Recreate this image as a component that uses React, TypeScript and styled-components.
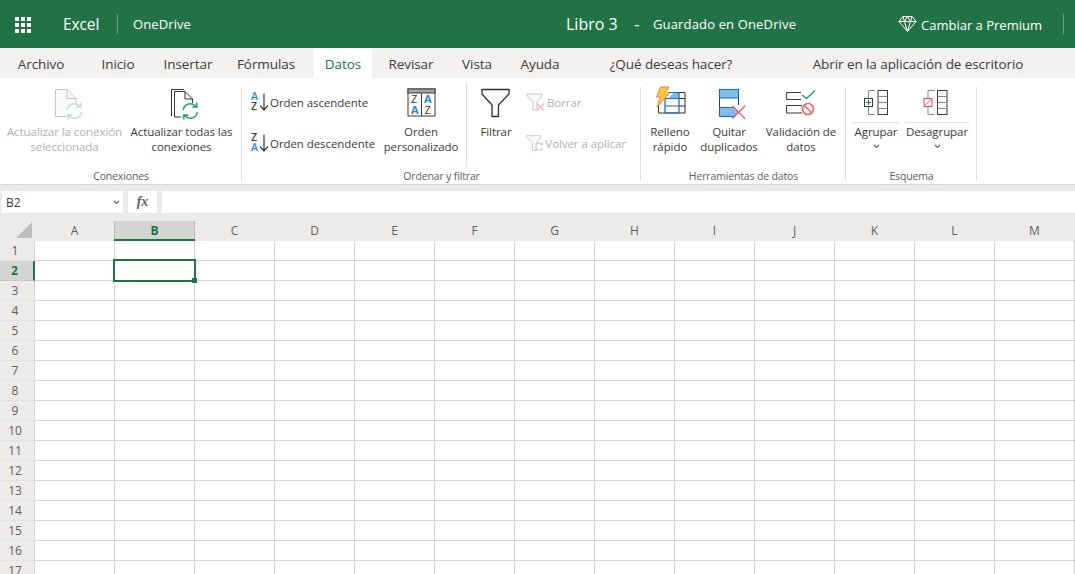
import { createGlobalStyle, styled } from "styled-components";

const GlobalStyle = createGlobalStyle`
  html, body {
    margin: 0;
    padding: 0;
    height: 574px;
    overflow: hidden;
    background: #edebe9;
    font-family: "Open Sans", "Noto Sans", "Liberation Sans", sans-serif;
  }
`;

const Page = styled.div`
  width: 1075px;
  height: 574px;
  display: flex;
  flex-direction: column;
  overflow: hidden;
`;

/* top green bar */
const Header = styled.header`
  height: 48px;
  flex: none;
  background: #217346;
  color: #fff;
  display: flex;
  align-items: center;
`;
const Waffle = styled.div`
  width: 16px;
  height: 16px;
  margin: 2px 32px 0 15px;
  display: grid;
  grid-template-columns: repeat(3, 4px);
  grid-auto-rows: 4px;
  gap: 2px;
  span {
    background: #fff;
  }
`;
const AppName = styled.span`
  font-size: 15.5px;
  width: 54px;
  letter-spacing: -0.1px;
`;
const VSep = styled.span`
  width: 1px;
  height: 20px;
  background: rgba(255, 255, 255, 0.35);
`;
const Place = styled.span`
  font-size: 13px;
  margin-left: 15px;
  width: 433px;
  letter-spacing: 0.1px;
`;
const DocTitle = styled.span`
  font-size: 16px;
  width: 87px;
  white-space: nowrap;
`;
const SaveState = styled.span`
  font-size: 13px;
  width: 245px;
  letter-spacing: 0.15px;
`;
const Premium = styled.span`
  font-size: 13px;
  margin-left: 4px;
  padding-top: 2px;
  width: 142px;
`;

/* tabs */
const TabBar = styled.nav`
  height: 30px;
  flex: none;
  background: #f3f2f1;
  display: flex;
  align-items: stretch;
  padding-left: 4px;
`;
const Tab = styled.div<{ $active?: boolean; $w: number }>`
  width: ${(p) => p.$w}px;
  font-size: 13.5px;
  letter-spacing: -0.08px;
  line-height: 32px;
  text-align: center;
  white-space: nowrap;
  color: ${(p) => (p.$active ? "#217346" : "#3b3a39")};
  background: ${(p) => (p.$active ? "#fff" : "transparent")};
`;

/* ribbon */
const Ribbon = styled.section`
  height: 107px;
  flex: none;
  background: #fff;
  display: flex;
  border-bottom: 1px solid #dcdad8;
  box-sizing: border-box;
`;
const Group = styled.div<{ $w: number }>`
  width: ${(p) => p.$w}px;
  flex: none;
  box-sizing: border-box;
  display: flex;
  flex-direction: column;
  position: relative;
  &::after {
    content: "";
    position: absolute;
    right: 0;
    top: 9px;
    bottom: 3px;
    width: 1px;
    background: #e1dfdd;
  }
`;
const GroupBody = styled.div`
  flex: 1;
  min-height: 0;
  display: flex;
  align-items: flex-start;
`;
const GroupLabel = styled.div`
  height: 16px;
  font-size: 10.5px;
  line-height: 16px;
  text-align: center;
  color: #605e5c;
  letter-spacing: -0.15px;
`;
const LargeButton = styled.div<{ $w: number; $ml?: number; $off?: boolean }>`
  width: ${(p) => p.$w}px;
  margin-left: ${(p) => p.$ml ?? 0}px;
  flex: none;
  padding-top: 10px;
  display: flex;
  flex-direction: column;
  align-items: center;
  font-size: 11.5px;
  line-height: 15px;
  letter-spacing: -0.07px;
  text-align: center;
  white-space: nowrap;
  color: ${(p) => (p.$off ? "#b3b0ad" : "#3b3a39")};
`;
const IconSlot = styled.div<{ $h?: number }>`
  height: ${(p) => p.$h ?? 36}px;
  display: flex;
  align-items: flex-start;
  justify-content: center;
`;
const Stack = styled.div<{ $w: number; $ml: number }>`
  width: ${(p) => p.$w}px;
  margin-left: ${(p) => p.$ml}px;
  flex: none;
  padding-top: 13px;
  display: flex;
  flex-direction: column;
  gap: 19px;
`;
const SmallButton = styled.div<{ $off?: boolean }>`
  height: 22px;
  display: flex;
  align-items: center;
  gap: 1px;
  font-size: 11.5px;
  letter-spacing: -0.07px;
  white-space: nowrap;
  color: ${(p) => (p.$off ? "#b3b0ad" : "#3b3a39")};
`;
const Divider = styled.div`
  width: 1px;
  height: 85px;
  margin: 4px 0 0 0;
  background: #e1dfdd;
  flex: none;
`;
const SplitRule = styled.div`
  width: 100%;
  height: 1px;
  background: #e1dfdd;
  margin-bottom: 1px;
`;
const Chevron = styled.svg`
  margin-top: 5px;
`;

/* formula bar */
const FormulaBar = styled.div`
  height: 36px;
  flex: none;
  padding: 6px 0 0 2px;
  box-sizing: border-box;
  display: flex;
  gap: 5px;
  background: #edebe9;
`;
const NameBox = styled.div`
  width: 121px;
  height: 22px;
  box-sizing: border-box;
  background: #fff;
  padding: 0 3px 0 4px;
  display: flex;
  align-items: center;
  justify-content: space-between;
  font-size: 12px;
  color: #3b3a39;
  svg {
    margin-top: 0;
  }
`;
const FxBox = styled.div`
  width: 29px;
  height: 22px;
  background: #fff;
  text-align: center;
  font-family: "Liberation Serif", serif;
  font-style: italic;
  font-weight: 700;
  font-size: 14px;
  line-height: 21px;
  color: #605e5c;
`;
const FormulaInput = styled.div`
  flex: 1;
  height: 22px;
  background: #fff;
`;

/* sheet */
const Sheet = styled.div`
  flex: 1;
  display: grid;
  grid-template-columns: 35px repeat(13, 80px);
  grid-auto-rows: 20px;
  align-content: start;
  overflow: hidden;
  background: #fff;
`;
const Corner = styled.div`
  background: #edebe9;
  position: relative;
  &::after {
    content: "";
    position: absolute;
    right: 3px;
    bottom: 3px;
    border-style: solid;
    border-width: 0 0 16px 16px;
    border-color: transparent transparent #bfbdbb transparent;
  }
`;
const ColHead = styled.div<{ $on?: boolean }>`
  box-sizing: border-box;
  position: relative;
  background: ${(p) => (p.$on ? "#d4d4d2" : "#edebe9")};
  box-shadow: ${(p) => (p.$on ? "-1px 0 0 #bdbbb9" : "none")};
  border-right: 1px solid ${(p) => (p.$on ? "#bdbbb9" : "#edebe9")};
  color: ${(p) => (p.$on ? "#217346" : "#605e5c")};
  font-weight: ${(p) => (p.$on ? 700 : 400)};
  font-size: 12px;
  line-height: 19px;
  text-align: center;
  &::after {
    content: "";
    display: ${(p) => (p.$on ? "block" : "none")};
    position: absolute;
    left: -1px;
    right: -2px;
    bottom: 0;
    height: 2px;
    background: #217346;
  }
`;
const RowHead = styled.div<{ $on?: boolean }>`
  box-sizing: border-box;
  background: ${(p) => (p.$on ? "#d4d4d2" : "#edebe9")};
  border-right: ${(p) => (p.$on ? "2px solid #217346" : "1px solid #d4d4d4")};
  border-bottom: 1px solid ${(p) => (p.$on ? "#c8c6c4" : "#e3e1df")};
  color: ${(p) => (p.$on ? "#217346" : "#605e5c")};
  font-weight: ${(p) => (p.$on ? 700 : 400)};
  font-size: 12px;
  line-height: 20px;
  text-align: center;
  padding-right: 4px;
`;
const Cell = styled.div`
  box-sizing: border-box;
  border-right: 1px solid #d4d4d4;
  border-bottom: 1px solid #d4d4d4;
  position: relative;
`;
const Selection = styled.div`
  position: absolute;
  left: -2px;
  top: -2px;
  right: -2px;
  bottom: -2px;
  border: 2px solid #217346;
  z-index: 2;
  &::after {
    content: "";
    position: absolute;
    right: -3px;
    bottom: -3px;
    width: 5px;
    height: 5px;
    background: #217346;
  }
`;

const SrcBlue = "#2b88d8";
const Ink = "#3b3a39";

function RefreshArrows({ x, y, color }: { x: number; y: number; color: string }) {
  return (
    <g transform={`translate(${x} ${y})`} stroke={color} strokeWidth="1.5" fill="none">
      <path d="M-7 -1A7 7 0 0 1 5.5 -4.5M6.5 -8.5V-4H2" />
      <path d="M7 1A7 7 0 0 1 -5.5 4.5M-6.5 8.5V4H-2" />
    </g>
  );
}

function DocRefreshIcon({ off }: { off?: boolean }) {
  if (off) {
    return (
      <svg width="32" height="32" viewBox="0 0 32 32" fill="none" overflow="visible">
        <path d="M6.5 28.5V1.5H18L27 10.5V15M6.5 28.5H17" stroke="#c8c6c4" fill="#fafafa" />
        <path d="M18 1.5V10.5H27" stroke="#c8c6c4" />
        <RefreshArrows x={25.3} y={23} color="#b7e4c9" />
      </svg>
    );
  }
  return (
    <svg width="32" height="32" viewBox="0 0 32 32" fill="none" overflow="visible">
      <path d="M5.5 28V1.5H18" stroke="#323130" />
      <path d="M8.5 29V3.5H19L26.5 11V15M8.5 29H15" stroke="#323130" fill="#fff" />
      <path d="M19 3.5V11H26.5" stroke="#323130" />
      <RefreshArrows x={24.3} y={23} color="#21a366" />
    </svg>
  );
}

function SortIcon({ desc }: { desc?: boolean }) {
  const t = { fontSize: 10.5, fontWeight: 600, fontFamily: "Open Sans, sans-serif" };
  return (
    <svg width="19" height="22" viewBox="0 0 19 22" fill="none" overflow="visible">
      <text x="1" y="9" {...t} fill={desc ? Ink : SrcBlue}>
        {desc ? "Z" : "A"}
      </text>
      <text x="1" y="18.5" {...t} fill={desc ? SrcBlue : Ink}>
        {desc ? "A" : "Z"}
      </text>
      <path d="M14 2.5v16M10 14.5l4 4.5 4-4.5" stroke={Ink} strokeWidth="1.2" />
    </svg>
  );
}

function CustomSortIcon() {
  const t = { fontSize: 11, fontFamily: "Open Sans, sans-serif" };
  return (
    <svg width="29" height="30" viewBox="0 0 29 30" fill="none">
      <rect x="1" y="1" width="27" height="27" fill="#fff" stroke={Ink} />
      <rect x="1" y="1" width="27" height="4" fill="#a6a6a6" stroke={Ink} />
      <path d="M14.5 5v23" stroke={Ink} />
      <text x="4" y="15" {...t} fill={Ink}>Z</text>
      <text x="4" y="26" {...t} fontWeight="700" fill={SrcBlue}>A</text>
      <text x="17" y="15" {...t} fontWeight="700" fill={SrcBlue}>A</text>
      <text x="17.5" y="26" {...t} fill={Ink}>Z</text>
    </svg>
  );
}

function FunnelIcon() {
  return (
    <svg width="30" height="30" viewBox="0 0 30 30" fill="none">
      <path d="M1 1.5H28V6L17.5 17V28.5H11V17L1 6Z" fill="#fafafa" stroke="#323130" strokeWidth="1.3" />
    </svg>
  );
}

function SmallFunnelIcon({ kind }: { kind: "clear" | "reapply" }) {
  return (
    <svg width="20" height="20" viewBox="0 0 20 20" fill="none">
      <path d="M1 2H16V4L11 10V18H7V10L1 4Z" fill="#fafafa" stroke="#c8c6c4" />
      {kind === "clear" ? (
        <path d="M11 11.5l7 7M18 11.5l-7 7" stroke="#f0b4b4" strokeWidth="1.2" />
      ) : (
        <path d="M11 13a4 4 0 0 1 7-1.5M18.5 15a4 4 0 0 1-7 1.5M18 9.5v2.5h-2.5M11 19v-2.5h2.5" stroke="#a8dcbc" strokeWidth="1.1" />
      )}
    </svg>
  );
}

function FlashFillIcon() {
  return (
    <svg width="32" height="30" viewBox="0 3 32 30" fill="none" overflow="visible">
      <path d="M4.5 28V13.5H11V7.5H31V28Z" fill="#fafafa" />
      <path d="M14 13.5L20 7.5H25V13.5Z" fill="#83bbeb" />
      <path d="M4.5 21V28H31V7.5H25M25 13.5H31M25 21H31" stroke="#323130" />
      <path d="M11 13.5V28M25 7.5V28M11 13.5H25M11 21H25M11 28H25M14 7.5H25" stroke="#0f6cbd" strokeWidth="1.2" />
      <path d="M6.5 2H15L11 9H15L3 22L6.5 12H2.5Z" fill="#ffc83d" stroke="#e8833a" />
    </svg>
  );
}

function RemoveDupIcon() {
  return (
    <svg width="30" height="32" viewBox="0 0 30 32" fill="none" overflow="visible">
      <rect x="5.5" y="1.5" width="19" height="8.5" fill="#83bbeb" stroke="#0f6cbd" />
      <path d="M5.5 10V19.5M24.5 10V17" stroke={Ink} />
      <path d="M5.5 19.5H20L24.5 24L20 28.5H5.5Z" fill="#83bbeb" stroke="#0f6cbd" />
      <path d="M18.2 17.8l13 13M31.2 17.8l-13 13" stroke="#e8636b" strokeWidth="1.3" />
    </svg>
  );
}

function ValidationIcon() {
  return (
    <svg width="32" height="30" viewBox="0 0 32 30" fill="none">
      <path d="M16 4.5H1.5V11.5H16" fill="#fafafa" stroke={Ink} />
      <path d="M17 17.5H1.5V25H17" fill="#fafafa" stroke={Ink} />
      <path d="M17 7l4.5 3.5L30 2.5" stroke="#21a366" strokeWidth="1.4" />
      <circle cx="23" cy="21" r="5.5" fill="#fff" stroke="#e8636b" strokeWidth="1.6" />
      <path d="M19 17l8 8" stroke="#e8636b" strokeWidth="1.6" />
    </svg>
  );
}

function OutlineIcon({ minus }: { minus?: boolean }) {
  const c = minus ? "#e8474c" : "#0f6cbd";
  return (
    <svg width="26" height="27" viewBox={minus ? "1.5 0 26 27" : "0 0 26 27"} fill="none" overflow="visible">
      <rect x="15" y="2.5" width="9.5" height="24" fill="#fff" stroke={Ink} />
      <path d="M15 8.5h9.5M15 14.5h9.5M15 20.5h9.5" stroke="#8a8886" />
      <path d="M12 2.5H5.5V10M5.5 19V26.5H12" stroke="#8a8886" />
      <rect x="1.5" y="10.5" width="8" height="8" fill="#fff" stroke={minus ? c : Ink} />
      {minus ? (
        <path d="M2.5 17.5l6-6" stroke={c} />
      ) : (
        <path d="M5.5 12v5M3 14.5h5" stroke={c} />
      )}
    </svg>
  );
}

function DiamondIcon() {
  return (
    <svg width="19" height="18" viewBox="0 0 19 18" fill="none" stroke="#fff" strokeWidth="1">
      <path d="M5 1.5H14L18 6.5L9.5 16.5L1 6.5Z" />
      <path d="M1 6.5H18M6.5 6.5L9.5 16.5L12.5 6.5M6.5 6.5L5 1.5M12.5 6.5L14 1.5M6.5 6.5L9.5 1.5L12.5 6.5" />
    </svg>
  );
}

function ChevronDown() {
  return (
    <Chevron width="7" height="5" viewBox="0 0 7 5" fill="none">
      <path d="M1 1l2.5 2.5L6 1" stroke="#605e5c" strokeWidth="1.1" />
    </Chevron>
  );
}

const columns = "ABCDEFGHIJKLM".split("");
const rows = Array.from({ length: 17 }, (_, i) => i + 1);

export default function App() {
  return (
    <Page>
      <GlobalStyle />
      <Header>
        <Waffle>
          {Array.from({ length: 9 }, (_, i) => (
            <span key={i} />
          ))}
        </Waffle>
        <AppName>Excel</AppName>
        <VSep />
        <Place>OneDrive</Place>
        <DocTitle>Libro 3&nbsp;&nbsp;&nbsp;&nbsp;-</DocTitle>
        <SaveState>Guardado en OneDrive</SaveState>
        <DiamondIcon />
        <Premium>Cambiar a Premium</Premium>
        <VSep />
      </Header>

      <TabBar>
        <Tab $w={74}>Archivo</Tab>
        <Tab $w={80}>Inicio</Tab>
        <Tab $w={60}>Insertar</Tab>
        <Tab $w={96}>Fórmulas</Tab>
        <Tab $w={58} $active>Datos</Tab>
        <Tab $w={78}>Revisar</Tab>
        <Tab $w={54}>Vista</Tab>
        <Tab $w={72}>Ayuda</Tab>
        <Tab $w={190}>¿Qué deseas hacer?</Tab>
        <Tab $w={304}>Abrir en la aplicación de escritorio</Tab>
      </TabBar>

      <Ribbon>
        <Group $w={242}>
          <GroupBody>
            <LargeButton $w={129} $off>
              <IconSlot><DocRefreshIcon off /></IconSlot>
              Actualizar la conexión
              <br />
              seleccionada
            </LargeButton>
            <LargeButton $w={105}>
              <IconSlot><DocRefreshIcon /></IconSlot>
              Actualizar todas las
              <br />
              conexiones
            </LargeButton>
          </GroupBody>
          <GroupLabel>Conexiones</GroupLabel>
        </Group>

        <Group $w={399}>
          <GroupBody>
            <Stack $w={126} $ml={8}>
              <SmallButton><SortIcon />Orden ascendente</SmallButton>
              <SmallButton><SortIcon desc />Orden descendente</SmallButton>
            </Stack>
            <LargeButton $w={90}>
              <IconSlot><CustomSortIcon /></IconSlot>
              Orden
              <br />
              personalizado
            </LargeButton>
            <Divider />
            <LargeButton $w={58}>
              <IconSlot><FunnelIcon /></IconSlot>
              Filtrar
            </LargeButton>
            <Stack $w={100} $ml={1}>
              <SmallButton $off><SmallFunnelIcon kind="clear" />Borrar</SmallButton>
              <SmallButton $off><SmallFunnelIcon kind="reapply" />Volver a aplicar</SmallButton>
            </Stack>
          </GroupBody>
          <GroupLabel>Ordenar y filtrar</GroupLabel>
        </Group>

        <Group $w={205}>
          <GroupBody>
            <LargeButton $w={58}>
              <IconSlot><FlashFillIcon /></IconSlot>
              Relleno
              <br />
              rápido
            </LargeButton>
            <LargeButton $w={60}>
              <IconSlot><RemoveDupIcon /></IconSlot>
              Quitar
              <br />
              duplicados
            </LargeButton>
            <LargeButton $w={84}>
              <IconSlot><ValidationIcon /></IconSlot>
              Validación de
              <br />
              datos
            </LargeButton>
          </GroupBody>
          <GroupLabel>Herramientas de datos</GroupLabel>
        </Group>

        <Group $w={131}>
          <GroupBody>
            <LargeButton $w={46} $ml={7}>
              <IconSlot $h={34}><OutlineIcon /></IconSlot>
              <SplitRule />
              Agrupar
              <ChevronDown />
            </LargeButton>
            <LargeButton $w={64} $ml={6}>
              <IconSlot $h={34}><OutlineIcon minus /></IconSlot>
              <SplitRule />
              Desagrupar
              <ChevronDown />
            </LargeButton>
          </GroupBody>
          <GroupLabel>Esquema</GroupLabel>
        </Group>
      </Ribbon>

      <FormulaBar>
        <NameBox>
          B2
          <ChevronDown />
        </NameBox>
        <FxBox>fx</FxBox>
        <FormulaInput />
      </FormulaBar>

      <Sheet>
        <Corner />
        {columns.map((c) => (
          <ColHead key={c} $on={c === "B"}>{c}</ColHead>
        ))}
        {rows.map((r) => [
          <RowHead key={`h${r}`} $on={r === 2}>{r}</RowHead>,
          ...columns.map((c) => (
            <Cell key={`${c}${r}`}>
              {c === "B" && r === 2 && <Selection />}
            </Cell>
          )),
        ])}
      </Sheet>
    </Page>
  );
}
